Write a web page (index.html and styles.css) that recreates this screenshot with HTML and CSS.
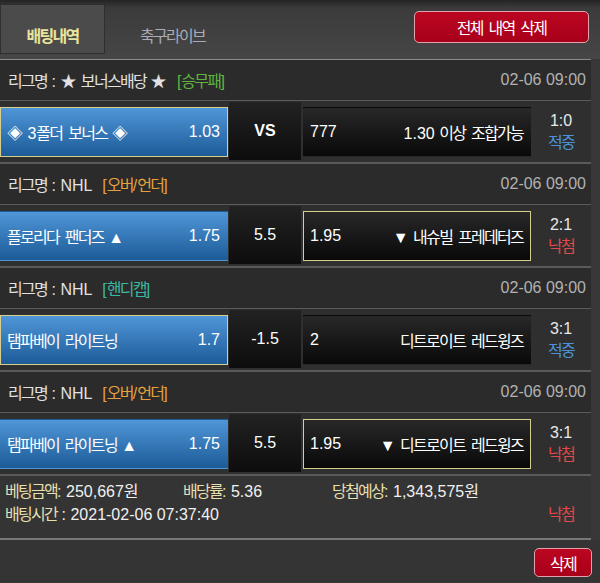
FILE: index.html
```html
<!DOCTYPE html>
<html lang="ko">
<head>
<meta charset="utf-8">
<title>배팅내역</title>
<link rel="stylesheet" href="styles.css">
</head>
<body>
<header class="header">
  <div class="tab active"><span class="k">배팅내역</span></div>
  <div class="tab"><span class="k">축구라이브</span></div>
  <button class="btn btn-all"><span class="k">전체 내역 삭제</span></button>
</header>
<main class="list">
  <section class="game">
    <div class="league">
      <span class="lg"><span class="k">리그명</span> : ★ <span class="k">보너스배당</span> ★ <span class="tag t-green">[<span class="k">승무패</span>]</span></span>
      <span class="date">02-06 09:00</span>
    </div>
    <div class="bet">
      <div class="side home sel"><span>◈ 3<span class="k">폴더 보너스</span> ◈</span><span>1.03</span></div>
      <div class="mid vs">VS</div>
      <div class="side away"><span>777</span><span>1.30 <span class="k">이상 조합가능</span></span></div>
      <div class="result"><span>1:0</span><span class="k hit">적중</span></div>
    </div>
  </section>
  <section class="game">
    <div class="league">
      <span class="lg"><span class="k">리그명</span> : NHL <span class="tag t-orange">[<span class="k">오버</span>/<span class="k">언더</span>]</span></span>
      <span class="date">02-06 09:00</span>
    </div>
    <div class="bet">
      <div class="side home"><span><span class="k">플로리다 팬더즈</span> ▲</span><span>1.75</span></div>
      <div class="mid">5.5</div>
      <div class="side away sel"><span>1.95</span><span>▼ <span class="k">내슈빌 프레데터즈</span></span></div>
      <div class="result"><span>2:1</span><span class="k miss">낙첨</span></div>
    </div>
  </section>
  <section class="game">
    <div class="league">
      <span class="lg"><span class="k">리그명</span> : NHL <span class="tag t-teal">[<span class="k">핸디캡</span>]</span></span>
      <span class="date">02-06 09:00</span>
    </div>
    <div class="bet">
      <div class="side home sel"><span class="k">탬파베이 라이트닝</span><span>1.7</span></div>
      <div class="mid">-1.5</div>
      <div class="side away"><span>2</span><span class="k">디트로이트 레드윙즈</span></div>
      <div class="result"><span>3:1</span><span class="k hit">적중</span></div>
    </div>
  </section>
  <section class="game">
    <div class="league">
      <span class="lg"><span class="k">리그명</span> : NHL <span class="tag t-orange">[<span class="k">오버</span>/<span class="k">언더</span>]</span></span>
      <span class="date">02-06 09:00</span>
    </div>
    <div class="bet">
      <div class="side home"><span><span class="k">탬파베이 라이트닝</span> ▲</span><span>1.75</span></div>
      <div class="mid">5.5</div>
      <div class="side away sel"><span>1.95</span><span>▼ <span class="k">디트로이트 레드윙즈</span></span></div>
      <div class="result"><span>3:1</span><span class="k miss">낙첨</span></div>
    </div>
  </section>
  <section class="summary">
    <div class="sum-row">
      <span><span class="lbl"><span class="k">베팅금액</span>:</span> 250,667<span class="k">원</span></span>
      <span><span class="lbl"><span class="k">배당률</span>:</span> 5.36</span>
      <span><span class="lbl"><span class="k">당첨예상</span>:</span> 1,343,575<span class="k">원</span></span>
    </div>
    <div class="sum-row2">
      <span><span class="lbl"><span class="k">배팅시간</span></span> : 2021-02-06 07:37:40</span>
      <span class="sum-result k miss">낙첨</span>
    </div>
  </section>
</main>
<footer class="footer">
  <button class="btn btn-del"><span class="k">삭제</span></button>
</footer>
</body>
</html>
```

FILE: styles.css
```css
* {
  box-sizing: border-box;
  margin: 0;
  padding: 0;
}

body {
  width: 600px;
  height: 583px;
  overflow: hidden;
  background: #383838;
  font-family: "Liberation Sans", "Noto Sans CJK KR", sans-serif;
  font-size: 16px;
  color: #eeeeee;
}

.k {
  font-size: 16px;
  letter-spacing: -1.7px;
  word-spacing: 3px;
}

/* header */
.header {
  height: 59px;
  display: flex;
  align-items: flex-start;
  background: linear-gradient(#242424 0, #3b3b3b 8px, #464646 100%);
}

.tab {
  width: 105px;
  height: 50px;
  margin-top: 4px;
  padding-top: 22px;
  line-height: 22px;
  text-align: center;
  color: #a9abb6;
}

.tab + .tab {
  margin-left: 15px;
}

.tab.active {
  background: #4b4b4b;
  border: 1px solid #2f2f2f;
  padding-top: 21px;
  color: #e8e49c;
  font-weight: bold;
}

.btn {
  font-family: inherit;
  color: #ffffff;
  cursor: pointer;
}

.btn-all {
  width: 175px;
  height: 32px;
  margin: 11px 11px 0 auto;
  background: linear-gradient(#bb0621, #a8001a);
  border: 1px solid #e2a2ab;
  border-radius: 5px;
  font-size: 16px;
}

/* list */
.list {
  width: 591px;
  border-top: 1px solid #8a8a8a;
}

.league {
  height: 41px;
  display: flex;
  align-items: center;
  justify-content: space-between;
  padding: 0 5px 0 8px;
  background: #2b2b2b;
  border-bottom: 1px solid #5a5a5a;
  color: #e2e2e2;
}

.tag {
  margin-left: 6px;
}

.t-green { color: #5fb43f; }
.t-orange { color: #e3a23f; }
.t-teal { color: #3bb8a3; }

.date {
  color: #b2b2b2;
}

.bet {
  height: 63px;
  display: flex;
  background: #2f2f2f;
  border-bottom: 2px solid #5a5a5a;
}

.game:last-of-type .bet {
  border-bottom: none;
  height: 61px;
}

.side {
  width: 228px;
  height: 50px;
  margin-top: 6px;
  display: flex;
  align-items: center;
  justify-content: space-between;
  padding: 0 7px 0 6px;
  border: 1px solid transparent;
  color: #ffffff;
}

.home {
  background: linear-gradient(#4f96d8, #1d5b98);
}

.away {
  margin-left: 2px;
  background: linear-gradient(#282828, #090909);
}

.sel {
  border-color: #d8cf8e;
}

.mid {
  width: 72px;
  margin: 1px 0 2px 1px;
  display: flex;
  align-items: center;
  justify-content: center;
  background: linear-gradient(#222222, #0d0d0d);
  color: #ffffff;
}

.vs {
  font-weight: bold;
}

.result {
  width: 60px;
  display: flex;
  flex-direction: column;
  align-items: center;
  justify-content: center;
  line-height: 22px;
  color: #e8e8e8;
}

.hit { color: #4d93da; }
.miss { color: #e24848; }

/* summary */
.summary {
  height: 64px;
  padding: 4px 0 0 5px;
  background: #343434;
  border-bottom: 2px solid #777777;
  line-height: 23px;
  color: #f0f0f0;
}

.sum-row {
  display: grid;
  grid-template-columns: 178px 149px auto;
}

.sum-row2 {
  display: flex;
}

.lbl {
  color: #e6dfae;
}

.sum-result {
  margin-left: auto;
  width: 60px;
  text-align: center;
}

/* footer */
.footer {
  height: 42px;
  display: flex;
  justify-content: flex-end;
  padding: 8px 8px 0 0;
  background: #343434;
}

.btn-del {
  width: 58px;
  height: 29px;
  background: linear-gradient(#bb0621, #a8001a);
  border: 1px solid #e2a2ab;
  border-radius: 5px;
  font-size: 16px;
}
```
